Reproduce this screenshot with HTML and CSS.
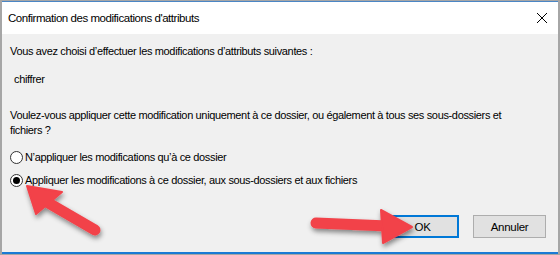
FILE: index.html
```html
<!DOCTYPE html>
<html lang="fr">
<head>
  <meta charset="UTF-8">
  <title>Confirmation des modifications d'attributs</title>
  <link rel="stylesheet" href="styles.css">
</head>
<body>
  <div class="window">
    <div class="titlebar">
      <span class="title">Confirmation des modifications d'attributs</span>
      <svg class="close" width="12" height="12" viewBox="0 0 12 12">
        <path d="M1 1 L11 11 M11 1 L1 11" stroke="#000" stroke-width="1" fill="none"/>
      </svg>
    </div>

    <div class="content">
      <p class="intro">Vous avez choisi d’effectuer les modifications d’attributs suivantes :</p>
      <p class="attr">chiffrer</p>
      <p class="question">Voulez-vous appliquer cette modification uniquement à ce dossier, ou également à tous ses sous-dossiers et fichiers ?</p>

      <div class="options">
        <label class="option">
          <span class="radio"></span>
          N’appliquer les modifications qu’à ce dossier
        </label>
        <label class="option">
          <span class="radio checked"></span>
          Appliquer les modifications à ce dossier, aux sous-dossiers et aux fichiers
        </label>
      </div>

      <div class="buttons">
        <button class="btn btn-default">OK</button>
        <button class="btn">Annuler</button>
      </div>
    </div>

    <!-- annotation arrows drawn over the dialog -->
    <svg class="arrows" width="560" height="255" viewBox="0 0 560 255">
      <defs>
        <filter id="shadow" x="-20%" y="-20%" width="140%" height="140%">
          <feDropShadow dx="1" dy="3" stdDeviation="2.5" flood-color="#000" flood-opacity="0.45"/>
        </filter>
      </defs>
      <g filter="url(#shadow)" fill="#f2424a" stroke="#f2424a">
        <line x1="95" y1="230" x2="45" y2="201" stroke-width="11" stroke-linecap="round"/>
        <polygon points="27,186 62,192 36,214" stroke-width="2" stroke-linejoin="round"/>
        <line x1="316" y1="223" x2="388" y2="226" stroke-width="11" stroke-linecap="round"/>
        <polygon points="412,227 381,210 383,243" stroke-width="2" stroke-linejoin="round"/>
      </g>
    </svg>
  </div>
</body>
</html>
```

FILE: styles.css
```css
* {
  margin: 0;
  padding: 0;
  box-sizing: border-box;
}

body {
  width: 560px;
  height: 255px;
  background: #a6a6a6;
  font-family: "Liberation Sans", Arial, sans-serif;
  font-size: 11px;
  letter-spacing: -0.35px;
  color: #000;
  overflow: hidden;
  padding-top: 1px;
}

.window {
  position: relative;
  margin-left: 2px;
  width: 556px;
  height: 253px;
  background: #f0f0f0;
  border-top: 1px solid #4a86c5;
  border-bottom: 2px solid #1a7ad4;
}

.titlebar {
  height: 32px;
  background: #fff;
  display: flex;
  align-items: center;
  justify-content: space-between;
  padding: 0 10px 0 6px;
}

.title {
  font-size: 11.5px;
  letter-spacing: -0.45px;
}

.close {
  margin-right: 0;
}

.content {
  padding: 10px 8px 0 8px;
  line-height: 15px;
}

.intro {
  margin-bottom: 13px;
}

.attr {
  padding-left: 4px;
  margin-bottom: 21px;
}

.question {
  margin-bottom: 12px;
  padding-right: 20px;
}

.options {
  display: flex;
  flex-direction: column;
  gap: 8px;
}

.option {
  display: flex;
  align-items: center;
  gap: 2px;
  height: 15px;
}

.radio {
  width: 13px;
  height: 13px;
  border: 1px solid #333;
  border-radius: 50%;
  background: #fff;
  display: flex;
  align-items: center;
  justify-content: center;
}

.radio.checked::after {
  content: "";
  width: 7px;
  height: 7px;
  border-radius: 50%;
  background: #000;
}

.buttons {
  display: flex;
  justify-content: flex-end;
  gap: 14px;
  margin-top: 27px;
  padding-right: 4px;
}

.btn {
  width: 73px;
  height: 23px;
  background: #e1e1e1;
  border: 1px solid #adadad;
  font-family: inherit;
  font-size: 11.5px;
  letter-spacing: -0.3px;
  color: #000;
}

.btn-default {
  border: 2px solid #0078d7;
}

.arrows {
  position: absolute;
  left: -2px;
  top: -2px;
  pointer-events: none;
}
```
